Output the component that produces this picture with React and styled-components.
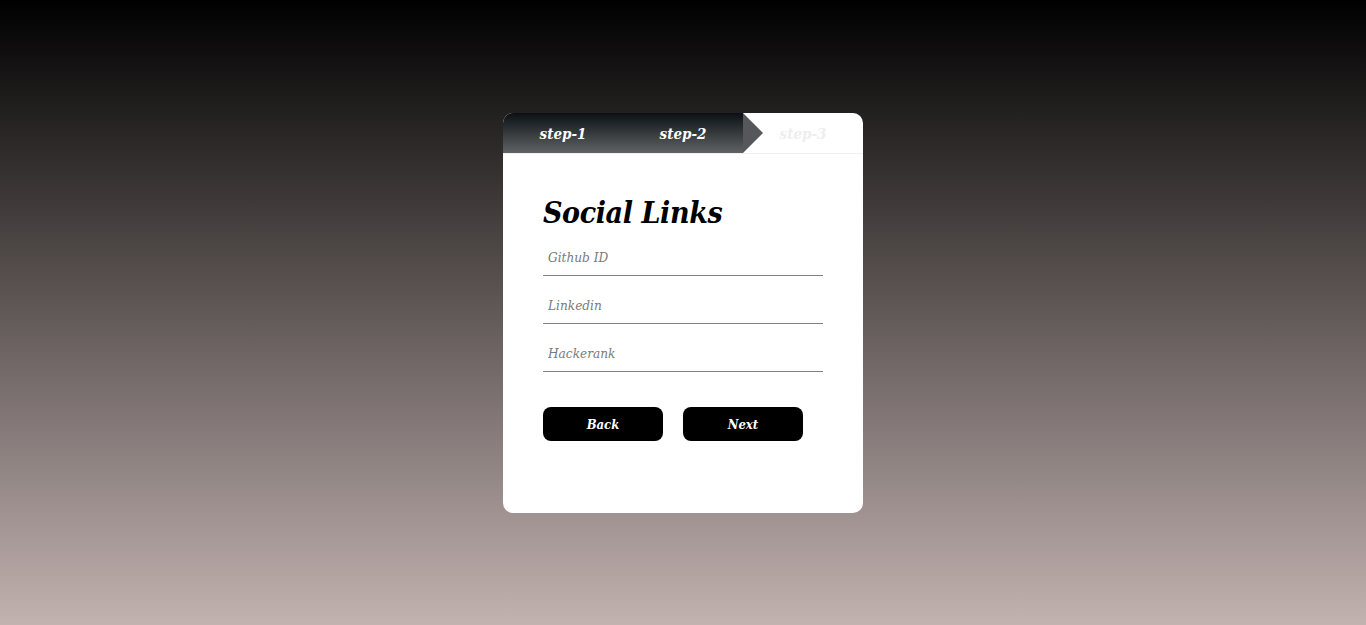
import React from "react";
import styled, { createGlobalStyle } from "styled-components";

const Global = createGlobalStyle`
  html, body { margin: 0; padding: 0; }
  body {
    min-height: 625px;
    background: linear-gradient(to bottom, #000000 0%, #c2b2b0 100%);
    font-family: "DejaVu Serif", "Liberation Serif", serif;
  }
`;

const Page = styled.div`
  height: 625px;
  display: flex;
  justify-content: center;
  align-items: flex-start;
  padding-top: 113px;
  box-sizing: border-box;
`;

const Card = styled.div`
  width: 360px;
  height: 400px;
  background: #fff;
  border-radius: 10px;
  overflow: hidden;
  display: flex;
  flex-direction: column;
`;

const Header = styled.div`
  display: flex;
  height: 41px;
  border-bottom: 1px solid #f0f0f0;
  box-sizing: border-box;
`;

const Done = styled.div`
  position: relative;
  display: flex;
  width: 240px;
  height: 40px;
  background: linear-gradient(to bottom, #0a1013 0%, #606366 100%);
  &::after {
    content: "";
    position: absolute;
    right: -20px;
    top: 0;
    border-top: 20px solid transparent;
    border-bottom: 20px solid transparent;
    border-left: 20px solid #55575a;
  }
`;

const Step = styled.div`
  width: 120px;
  height: 40px;
  display: flex;
  align-items: center;
  justify-content: center;
  font-style: italic;
  font-weight: bold;
  font-stretch: condensed;
  font-size: 15px;
  color: ${(p) => (p.$active ? "#ffffff" : "#eeeeee")};
  padding-top: 1px;
  box-sizing: border-box;
`;

const Body = styled.div`
  padding: 38px 40px 0 40px;
  display: flex;
  flex-direction: column;
`;

const Title = styled.h1`
  margin: 0 0 2px 0;
  font-style: italic;
  font-weight: bold;
  font-stretch: condensed;
  font-size: 30px;
  line-height: 42px;
  color: #000;
  letter-spacing: -0.4px;
`;

const Field = styled.input`
  width: 280px;
  height: 40px;
  margin-bottom: 8px;
  box-sizing: border-box;
  border: none;
  border-bottom: 1px solid #808080;
  outline: none;
  padding: 2px 5px 0 5px;
  font-family: "DejaVu Serif", "Liberation Serif", serif;
  font-style: italic;
  font-stretch: condensed;
  font-size: 13.5px;
  color: #333;
  background: transparent;
  &::placeholder { color: #7a7a7a; }
`;

const Buttons = styled.div`
  display: flex;
  gap: 20px;
  margin-top: 27px;
`;

const Button = styled.button`
  width: 120px;
  height: 34px;
  border: none;
  border-radius: 8px;
  background: #000;
  color: #fff;
  font-family: "DejaVu Serif", "Liberation Serif", serif;
  font-style: italic;
  font-weight: bold;
  font-stretch: condensed;
  font-size: 13px;
  cursor: pointer;
`;

export default function App() {
  return (
    <>
      <Global />
      <Page>
        <Card>
          <Header>
            <Done>
              <Step $active>step-1</Step>
              <Step $active>step-2</Step>
            </Done>
            <Step>step-3</Step>
          </Header>
          <Body>
            <Title>Social Links</Title>
            <Field placeholder="Github ID" />
            <Field placeholder="Linkedin" />
            <Field placeholder="Hackerank" />
            <Buttons>
              <Button>Back</Button>
              <Button>Next</Button>
            </Buttons>
          </Body>
        </Card>
      </Page>
    </>
  );
}
